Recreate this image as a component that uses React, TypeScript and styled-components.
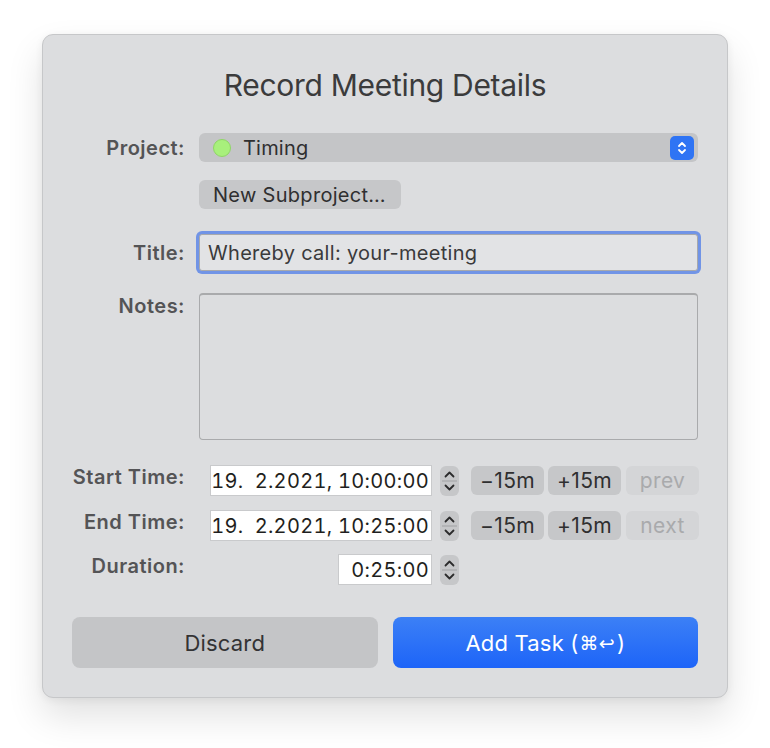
import React from 'react';
import styled, { createGlobalStyle } from 'styled-components';

const GlobalStyle = createGlobalStyle`
  body {
    margin: 0;
    background: #ffffff;
    font-family: Inter, "Liberation Sans", sans-serif;
  }
`;

const Page = styled.div`
  width: 770px;
  height: 748px;
  padding: 34px 0 0 42px;
  box-sizing: border-box;
`;

const Window = styled.div`
  width: 686px;
  height: 664px;
  box-sizing: border-box;
  background: #dcdddf;
  border: 1px solid #c6c7c9;
  border-radius: 11px;
  box-shadow: 0 18px 36px rgba(0, 0, 0, 0.12), 0 2px 8px rgba(0, 0, 0, 0.06);
  padding: 31px 29px 29px 29px;
  display: flex;
  flex-direction: column;
`;

const Heading = styled.h1`
  margin: 0;
  text-align: center;
  font-size: 30px;
  line-height: 38px;
  font-weight: 400;
  color: #3b3b3c;
  letter-spacing: -0.3px;
`;

const Row = styled.div<{ top: number; align?: string }>`
  display: grid;
  grid-template-columns: 113px 1fr;
  column-gap: 14px;
  align-items: ${p => p.align || 'center'};
  margin-top: ${p => p.top}px;
`;

const Label = styled.div<{ pad?: number }>`
  text-align: right;
  font-size: 20px;
  line-height: 24px;
  letter-spacing: 0.5px;
  font-weight: 600;
  color: #545456;
  padding-top: ${p => p.pad || 0}px;
  white-space: nowrap;
`;

const Popup = styled.div`
  height: 29px;
  background: #c4c5c7;
  border-radius: 6px;
  display: flex;
  align-items: center;
  padding: 0 4px 0 14px;
  gap: 12px;
  font-size: 20px;
  letter-spacing: 0.2px;
  color: #2f2f30;
`;

const Dot = styled.span`
  width: 18px;
  height: 18px;
  border-radius: 50%;
  background: #a8f07c;
  border: 1px solid #8fd666;
  box-sizing: border-box;
`;

const Grow = styled.span`
  flex: 1;
`;

const PopupArrow = styled.span`
  width: 24px;
  height: 24px;
  border-radius: 5px;
  background: #2f74f4;
  display: flex;
  align-items: center;
  justify-content: center;
`;

const SmallButton = styled.div`
  justify-self: start;
  height: 29px;
  padding: 0 15px 0 14px;
  display: flex;
  align-items: center;
  background: #c6c7c9;
  border-radius: 6px;
  font-size: 20px;
  letter-spacing: 0.3px;
  color: #2f2f30;
`;

const FocusField = styled.div`
  height: 37px;
  box-sizing: border-box;
  background: #e2e3e5;
  border: 1px solid #a8a9ab;
  border-radius: 3px;
  box-shadow: 0 0 0 3px #7194e6;
  display: flex;
  align-items: center;
  padding: 0 8px;
  font-size: 20px;
  letter-spacing: 0.3px;
  color: #3a3a3b;
`;

const NotesBox = styled.div`
  height: 147px;
  box-sizing: border-box;
  background: #dcdddf;
  border: 1px solid #a9aaac;
  border-top-width: 2px;
  border-radius: 4px;
`;

const TimeControls = styled.div<{ indent: number }>`
  display: flex;
  align-items: center;
  margin-left: ${p => p.indent}px;
`;

const DateField = styled.div<{ w: number }>`
  width: ${p => p.w}px;
  height: 31px;
  box-sizing: border-box;
  background: #ffffff;
  border: 1px solid #c9cacc;
  display: flex;
  align-items: center;
  justify-content: flex-end;
  padding: 0 2px;
  font-size: 20px;
  letter-spacing: 0.3px;
  color: #1f1f20;
  font-variant-numeric: tabular-nums;
  white-space: pre;
`;

const Stepper = styled.span`
  width: 19px;
  height: 30px;
  margin-left: 8px;
  margin-right: 8px;
  background: #c6c7c9;
  border-radius: 6px;
  display: flex;
`;

const StepButton = styled.div<{ off?: boolean }>`
  width: 73px;
  height: 29px;
  margin-left: ${p => (p.off ? 5 : 4)}px;
  border-radius: 6px;
  background: ${p => (p.off ? '#d4d5d7' : '#c6c7c9')};
  color: ${p => (p.off ? '#a9aaac' : '#2f2f30')};
  display: flex;
  align-items: center;
  justify-content: center;
  font-size: 21px;
  letter-spacing: 0.4px;
`;

const ButtonBar = styled.div`
  margin-top: 32px;
  display: grid;
  grid-template-columns: 1fr 1fr;
  gap: 15px;
`;

const BigButton = styled.div<{ primary?: boolean }>`
  height: 51px;
  border-radius: 8px;
  display: flex;
  align-items: center;
  justify-content: center;
  font-size: 22px;
  letter-spacing: 0.2px;
  background: ${p => (p.primary ? 'linear-gradient(#3c80f6, #1d64f8)' : '#c4c5c7')};
  color: ${p => (p.primary ? '#ffffff' : '#333334')};
`;

const Keys = styled.span`
  font-family: "DejaVu Sans", sans-serif;
  font-size: 19px;
  margin: 0 2px 0 1px;
`;

const UpDown = ({ color, w, h }: { color: string; w: number; h: number }) => (
  <svg width={w} height={h} viewBox="0 0 12 16" fill="none">
    <path d="M3 6 L6 3 L9 6" stroke={color} strokeWidth="1.8" strokeLinecap="round" strokeLinejoin="round" />
    <path d="M3 10 L6 13 L9 10" stroke={color} strokeWidth="1.8" strokeLinecap="round" strokeLinejoin="round" />
  </svg>
);

const StepIcon = () => (
  <svg width="19" height="30" viewBox="0 0 19 30" fill="none">
    <path d="M5.5 10.5 L9.5 6.5 L13.5 10.5" stroke="#2b2b2c" strokeWidth="1.8" strokeLinecap="round" strokeLinejoin="round" />
    <line x1="2" y1="15" x2="17" y2="15" stroke="#a0a1a3" strokeWidth="1" />
    <path d="M5.5 19.5 L9.5 23.5 L13.5 19.5" stroke="#2b2b2c" strokeWidth="1.8" strokeLinecap="round" strokeLinejoin="round" />
  </svg>
);

type TimeRowProps = {
  label: string;
  value: string;
  last: string;
  top: number;
};

const TimeRow = ({ label, value, last, top }: TimeRowProps) => (
  <Row top={top} align="start">
    <Label>{label}</Label>
    <TimeControls indent={11}>
      <DateField w={222}>{value}</DateField>
      <Stepper><StepIcon /></Stepper>
      <StepButton>−15m</StepButton>
      <StepButton>+15m</StepButton>
      <StepButton off>{last}</StepButton>
    </TimeControls>
  </Row>
);

export default function App() {
  return (
    <Page>
      <GlobalStyle />
      <Window>
        <Heading>Record Meeting Details</Heading>
        <Row top={29}>
          <Label>Project:</Label>
          <Popup>
            <Dot />
            <Grow>Timing</Grow>
            <PopupArrow><UpDown color="#ffffff" w={12} h={16} /></PopupArrow>
          </Popup>
        </Row>
        <Row top={18}>
          <span />
          <SmallButton>New Subproject…</SmallButton>
        </Row>
        <Row top={25}>
          <Label>Title:</Label>
          <FocusField>Whereby call: your-meeting</FocusField>
        </Row>
        <Row top={22} align="start">
          <Label pad={1}>Notes:</Label>
          <NotesBox />
        </Row>
        <TimeRow top={25} label="Start Time:" value="19.  2.2021, 10:00:00" last="prev" />
        <TimeRow top={14} label="End Time:" value="19.  2.2021, 10:25:00" last="next" />
        <Row top={13} align="start">
          <Label>Duration:</Label>
          <TimeControls indent={139}>
            <DateField w={94}>0:25:00</DateField>
            <Stepper><StepIcon /></Stepper>
          </TimeControls>
        </Row>
        <ButtonBar>
          <BigButton>Discard</BigButton>
          <BigButton primary>
            Add Task (<Keys>⌘↩</Keys>)
          </BigButton>
        </ButtonBar>
      </Window>
    </Page>
  );
}
